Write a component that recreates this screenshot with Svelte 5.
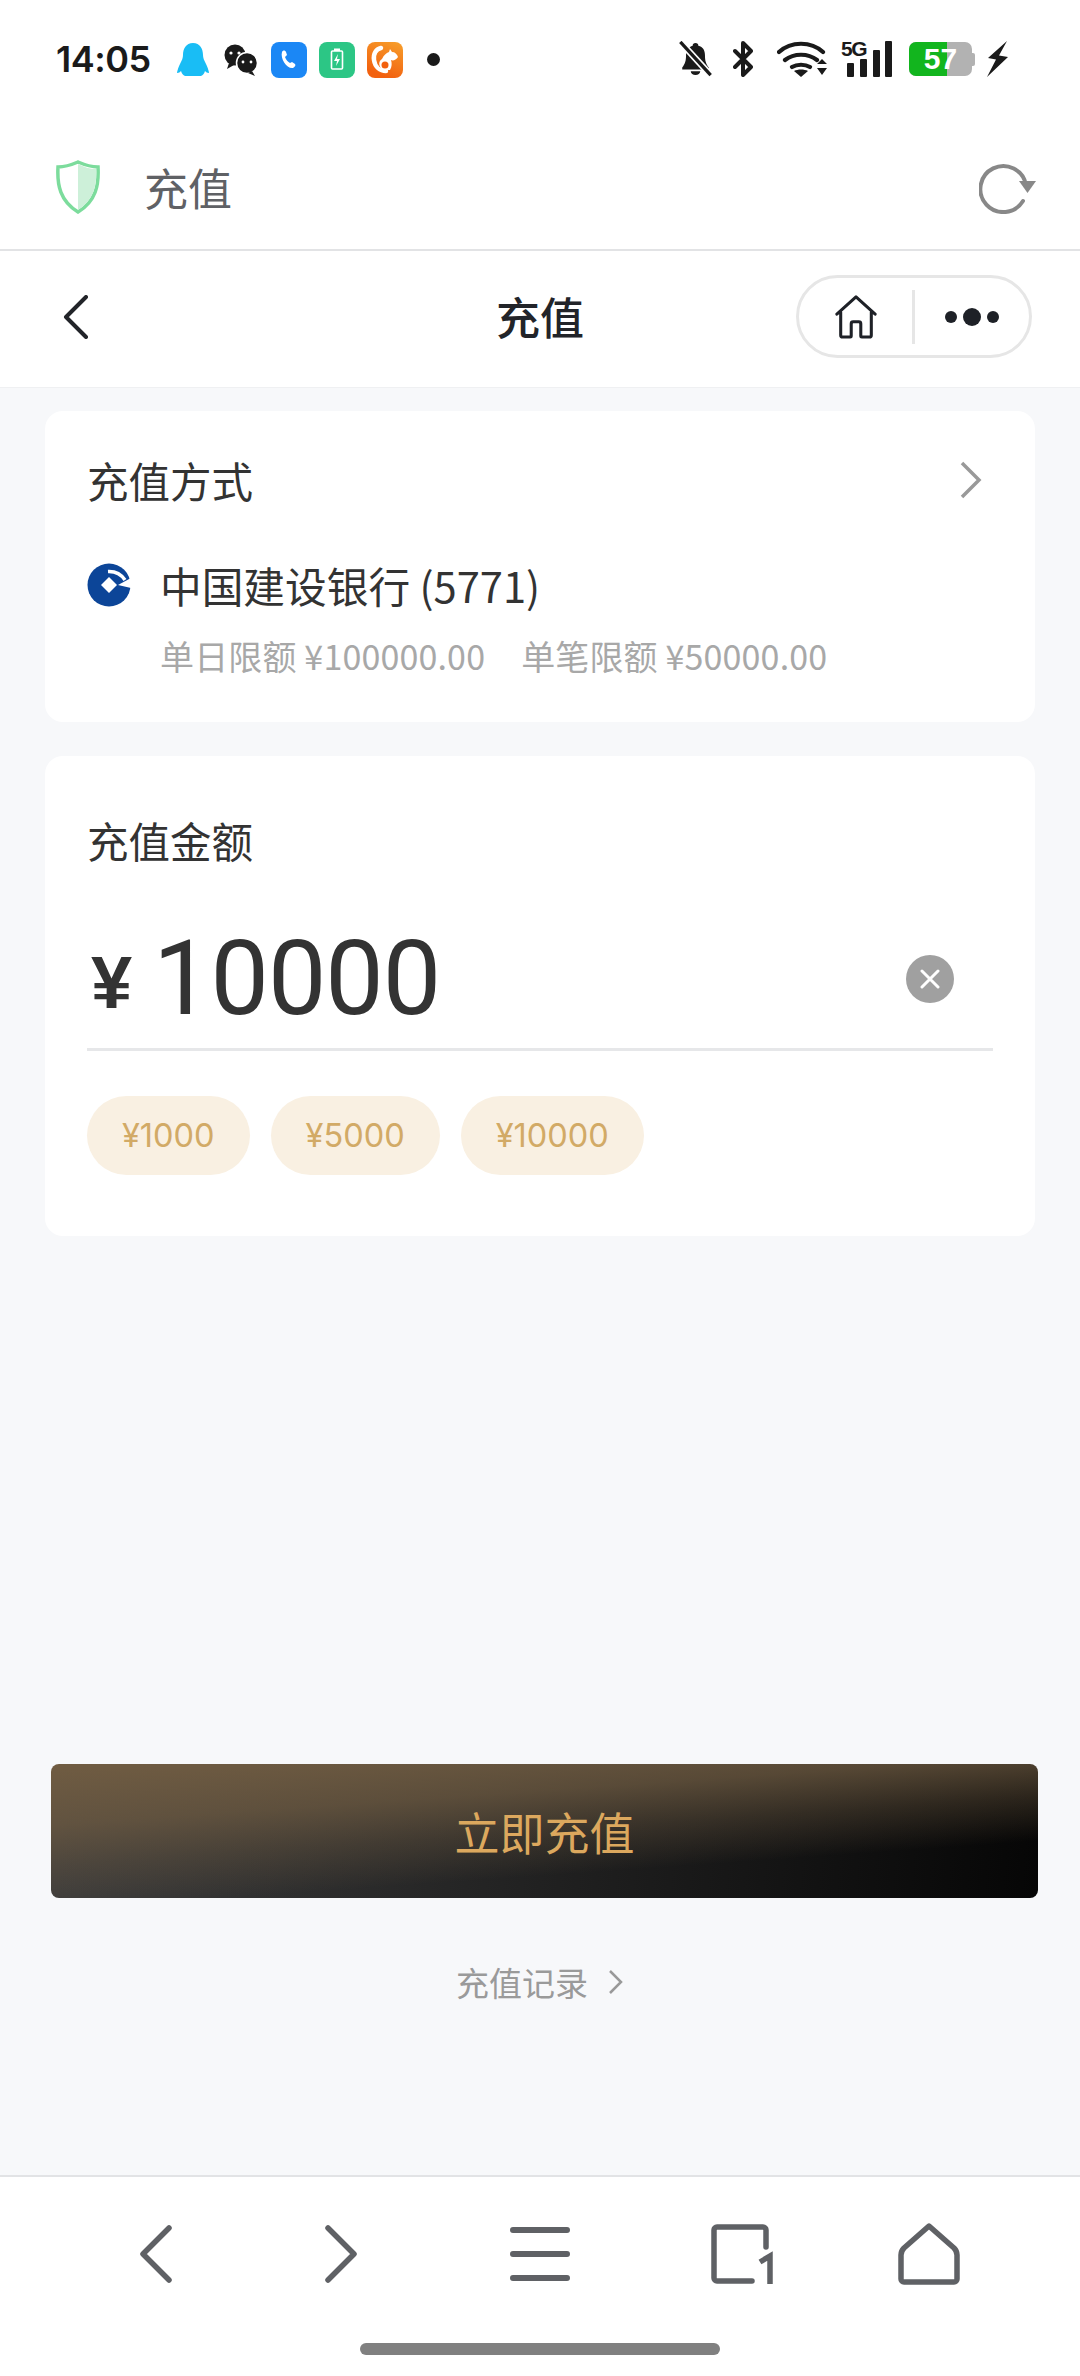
<script>
  const amounts = ['¥1000', '¥5000', '¥10000'];
</script>

<div class="page">
  <header class="status">
    <div class="left">
      <span class="time">14:05</span>
      <svg class="notif" width="250" height="40" viewBox="0 0 250 40">
        <defs>
          <linearGradient id="uc" x1="1" y1="0" x2="0.6" y2="1">
            <stop offset="0" stop-color="#f7a02c"/><stop offset="1" stop-color="#f2610f"/>
          </linearGradient>
        </defs>
        <path d="M19 4c-7 0-10 6-10 12 0 3-1 5-3 9-2 4-3 8-3 9 2 0 3-1 4-2 1 3 2 4 4 5h16c2-1 3-2 4-5 1 1 2 2 4 2 0-1-1-5-3-9-2-4-3-6-3-9 0-6-3-12-10-12z" fill="#19bdf5"/>
        <g transform="translate(3 3)">
          <circle cx="58" cy="13" r="10.500" fill="#1a1a1a"/><path d="M52 21l-2 6 7-4z" fill="#1a1a1a"/>
          <circle cx="70" cy="21" r="10.500" fill="#1a1a1a" stroke="#fff" stroke-width="1.500"/><path d="M75 29l3 5-7-3z" fill="#1a1a1a"/>
          <circle cx="54" cy="11" r="1.600" fill="#fff"/><circle cx="62" cy="11" r="1.600" fill="#fff"/><circle cx="66" cy="20" r="1.400" fill="#fff"/><circle cx="74" cy="20" r="1.400" fill="#fff"/>
        </g>
        <rect x="97" y="3" width="36" height="36" rx="8" fill="#1b87f5"/>
        <path d="M108 13c1-2 3-2 4 0l1 3-2 2c1 3 3 5 5 6l2-1 3 2c1 1 0 3-2 4-6 1-13-9-11-16z" fill="#fff"/>
        <rect x="145" y="3" width="36" height="36" rx="8" fill="#2cc685"/>
        <rect x="157.500" y="12" width="11" height="18" rx="1" fill="none" stroke="#fff" stroke-width="1.600"/>
        <rect x="160" y="9.500" width="6" height="2.500" fill="#fff"/>
        <path d="M164 15l-4 7h3l-1 5 4-7h-3z" fill="#fff"/>
        <rect x="193" y="3" width="36" height="36" rx="8" fill="url(#uc)"/>
        <path d="M207 9c-5 1-8 6-7 12 1 7 6 11 12 11" fill="none" stroke="#fff" stroke-width="4.500" stroke-linecap="round"/>
        <path d="M208 20c2-4 4-6 7-7l1-3 2 3c3 0 5 2 6 5-2 3-5 4-7 3 1 3 1 7-1 10h-5a6 6 0 0 1-3-11z" fill="#fff"/>
        <circle cx="211" cy="26" r="3.500" fill="#f2610f"/>
      </svg>
      <span class="dot"></span>
    </div>
    <div class="right">
      <svg width="35" height="36" viewBox="0 0 36 38">
        <path d="M18 2a3 3 0 0 1 3 3c5 1 7 5 7 10 0 6 1 9 4 13v2H4v-2c3-4 4-7 4-13 0-5 3-9 7-10a3 3 0 0 1 3-3z M13 32h10a5 4 0 0 1-10 0z" fill="#1a1a1a"/>
        <path d="M2 1l32 35" stroke="#fff" stroke-width="7"/><path d="M2 1l32 35" stroke="#1a1a1a" stroke-width="3.500"/>
      </svg>
      <svg class="bt" width="20" height="36" viewBox="0 0 20 36">
        <path d="M2 10l16 16-8 8V2l8 8L2 26" fill="none" stroke="#1a1a1a" stroke-width="4" stroke-linejoin="round" stroke-linecap="round"/>
      </svg>
      <svg class="wifi" width="50" height="36" viewBox="0 0 50 36">
        <path d="M2 11c12-11 32-11 44 0M8 19c9-7 23-7 32 0M15 26c5-3 13-3 18 0" fill="none" stroke="#1a1a1a" stroke-width="4.200" stroke-linecap="round"/>
        <path d="M24 36l-7-6c4-2 10-2 14 0z" fill="#1a1a1a"/>
        <path d="M40 23h10l-5-5zM40 27h10l-5 7z" fill="#1a1a1a"/>
      </svg>
      <div class="cell">
        <span class="five">5G</span>
        <span class="bar b1"></span><span class="bar b2"></span><span class="bar b3"></span><span class="bar b4"></span>
      </div>
      <div class="battery">
        <div class="shell">
          <span class="fill"></span>
          <span class="level">57</span>
        </div>
        <span class="nub"></span>
      </div>
      <svg class="bolt" width="21" height="36" viewBox="0 0 21 36">
        <path d="M20 0L1 17l8 1.500L0 36l21-20-9-1.500z" fill="#1a1a1a"/>
      </svg>
    </div>
  </header>

  <div class="urlbar">
    <div class="url-left">
      <svg width="46" height="54" viewBox="0 0 46 54">
        <path d="M23 2c7 3 13 5 20 5 1 18-2 34-20 45C5 41 2 25 3 7c7 0 13-2 20-5z" fill="#fff" stroke="#7cdc9c" stroke-width="3.500"/>
        <path d="M23 4c6 3 12 5 18 5 1 16-2 31-18 41z" fill="#cdf0d9"/>
      </svg>
      <span class="url-title">充值</span>
    </div>
    <svg width="58" height="54" viewBox="0 0 58 54">
      <path d="M47 25A23 23 0 1 0 44 41" fill="none" stroke="#888" stroke-width="4" stroke-linecap="round"/>
      <path d="M40 21h17l-8.500 12z" fill="#888"/>
    </svg>
  </div>

  <nav class="mini">
    <svg class="back" width="26" height="44" viewBox="0 0 26 44">
      <path d="M23 2L3 22l20 20" fill="none" stroke="#222429" stroke-width="4" stroke-linecap="round" stroke-linejoin="round"/>
    </svg>
    <h1>充值</h1>
    <div class="capsule">
      <svg width="44" height="44" viewBox="0 0 44 46">
        <path d="M2 20L22 2l20 18M6 18v24a2 2 0 0 0 2 2h8a1 1 0 0 0 1-1V30a2 2 0 0 1 2-2h6a2 2 0 0 1 2 2v13a1 1 0 0 0 1 1h8a2 2 0 0 0 2-2V18" fill="none" stroke="#1e2127" stroke-width="3.200" stroke-linejoin="round" stroke-linecap="round"/>
      </svg>
      <span class="sep"></span>
      <div class="dots"><i></i><i class="big"></i><i></i></div>
    </div>
  </nav>

  <main>
    <section class="card method">
      <div class="row">
        <span class="label">充值方式</span>
        <svg width="24" height="38" viewBox="0 0 24 38"><path d="M3 2l17 17L3 36" fill="none" stroke="#999" stroke-width="3.500"/></svg>
      </div>
      <div class="bank">
        <svg width="44" height="44" viewBox="0 0 44 44">
          <circle cx="22" cy="22" r="21.500" fill="#0c4598"/>
          <path d="M22 14l8 8-8 8-8-8z" fill="#fff"/>
          <path d="M21 8.500Q32 8 38 17" stroke="#fff" stroke-width="3.500" fill="none"/>
          <path d="M31 22L44 15V25z" fill="#fff"/>
        </svg>
        <span class="bank-name">中国建设银行 (5771)</span>
      </div>
      <div class="limits"><span>单日限额 ¥100000.00</span><span>单笔限额 ¥50000.00</span></div>
    </section>

    <section class="card amount">
      <span class="label">充值金额</span>
      <div class="input">
        <span class="yen">¥</span>
        <span class="value">10000</span>
        <span class="clear">
          <svg width="20" height="20" viewBox="0 0 20 20"><path d="M2 2l16 16M18 2L2 18" stroke="#fff" stroke-width="3" stroke-linecap="round"/></svg>
        </span>
      </div>
      <div class="chips">
        {#each amounts as a}
          <span class="chip">{a}</span>
        {/each}
      </div>
    </section>

    <button class="pay">立即充值</button>
    <div class="records">
      <span>充值记录</span>
      <svg width="16" height="26" viewBox="0 0 16 26"><path d="M2 2l11 11L2 24" fill="none" stroke="#999" stroke-width="2.500"/></svg>
    </div>
  </main>

  <footer>
    <div class="tools">
      <svg width="34" height="58" viewBox="0 0 34 58"><path d="M30 3L4 29l26 26" fill="none" stroke="#5f6165" stroke-width="5.500" stroke-linecap="round" stroke-linejoin="round"/></svg>
      <svg width="34" height="58" viewBox="0 0 34 58"><path d="M4 3l26 26L4 55" fill="none" stroke="#5f6165" stroke-width="5.500" stroke-linecap="round" stroke-linejoin="round"/></svg>
      <svg width="60" height="56" viewBox="0 0 60 56"><path d="M3 4h54M3 28h54M3 52h54" stroke="#5f6165" stroke-width="6" stroke-linecap="round"/></svg>
      <svg width="62" height="60" viewBox="0 0 62 60">
        <path d="M55 23V6a3 3 0 0 0-3-3H6a3 3 0 0 0-3 3v48a3 3 0 0 0 3 3h35" fill="none" stroke="#5f6165" stroke-width="5.500" stroke-linecap="round"/>
        <path d="M49 38l10-6v28" fill="none" stroke="#5f6165" stroke-width="5.500"/>
      </svg>
      <svg width="62" height="62" viewBox="0 0 62 62"><path d="M31 3L6 25q-3 3-3 7v24a3 3 0 0 0 3 3h50a3 3 0 0 0 3-3V32q0-4-3-7z" fill="none" stroke="#5f6165" stroke-width="5.500" stroke-linejoin="round"/></svg>
    </div>
    <div class="home-bar"></div>
  </footer>
</div>

<style>
  :global(body) { margin: 0; background: #fff; }
  .page {
    width: 1080px;
    height: 2376px;
    display: flex;
    flex-direction: column;
    font-family: "Noto Sans CJK SC", "Noto Sans", sans-serif;
    background: #f7f8fa;
    overflow: hidden;
  }
  svg { display: block; flex: none; }

  .status {
    height: 118px;
    box-sizing: border-box;
    padding: 39px 0 0 56px;
    background: #fff;
    display: flex;
    justify-content: space-between;
    align-items: flex-start;
  }
  .left { display: flex; align-items: center; height: 40px; }
  .time { font: 600 36px/40px Inter, sans-serif; color: #1a1a1a; width: 118px; letter-spacing: -0.5px; }
  .dot { width: 13px; height: 13px; border-radius: 50%; background: #1a1a1a; margin-left: 3px; }
  .right { display: flex; align-items: center; height: 40px; margin-right: 72px; }
  .bt { margin-left: 20px; }
  .wifi { margin-left: 24px; }
  .cell { position: relative; width: 51px; height: 36px; margin-left: 14px; }
  .five { position: absolute; left: 0; top: -3px; font: 700 21px/22px "Liberation Sans", sans-serif; color: #1a1a1a; letter-spacing: -1.5px; }
  .bar { position: absolute; bottom: 0; width: 7px; background: #1a1a1a; border-radius: 1px; }
  .b1 { left: 6px; height: 14px; }
  .b2 { left: 19px; height: 18px; }
  .b3 { left: 32px; height: 27px; }
  .b4 { left: 44px; height: 36px; }
  .battery { display: flex; align-items: center; width: 66px; height: 34px; margin-left: 17px; }
  .shell {
    position: relative;
    width: 63px;
    height: 34px;
    background: #b2b2b2;
    border-radius: 7px;
    overflow: hidden;
    text-align: center;
  }
  .nub { width: 3px; height: 13px; background: #b2b2b2; border-radius: 0 2px 2px 0; }
  .fill { position: absolute; left: 0; top: 0; bottom: 0; width: 38px; background: #12b51e; }
  .level { position: relative; font: 700 30px/34px "Liberation Sans", sans-serif; color: #fff; }
  .bolt { margin-left: 12px; }

  .urlbar {
    height: 133px;
    box-sizing: border-box;
    background: #fff;
    border-bottom: 2px solid #e2e3e5;
    padding: 7px 0 0 55px;
    display: flex;
    justify-content: space-between;
    align-items: center;
  }
  .url-left { display: flex; align-items: center; gap: 43px; }
  .url-title { font-size: 44px; line-height: 60px; color: #5f6165; }
  .urlbar > svg { margin-right: 43px; }

  .mini {
    height: 137px;
    box-sizing: border-box;
    background: #fff;
    border-bottom: 1px solid #eff0f2;
    position: relative;
    display: flex;
    align-items: center;
    justify-content: space-between;
    padding: 0 48px 5px 63px;
  }
  h1 {
    position: absolute;
    left: 0; right: 0;
    margin: -2px 0 0;
    text-align: center;
    font-size: 44px;
    font-weight: 500;
    line-height: 60px;
    color: #222429;
  }
  .capsule {
    position: relative;
    width: 236px;
    height: 83px;
    box-sizing: border-box;
    border: 3px solid #e6e6e6;
    border-radius: 42px;
    display: flex;
    align-items: center;
    padding-left: 35px;
  }
  .sep { width: 3px; height: 54px; background: #e6e6e6; margin-left: 34px; }
  .dots { display: flex; align-items: center; gap: 6px; margin-left: 30px; }
  .dots i { width: 12px; height: 12px; border-radius: 50%; background: #1e2127; }
  .dots i.big { width: 18px; height: 18px; }

  main {
    flex: 1;
    padding: 23px 45px 0;
    display: flex;
    flex-direction: column;
    min-height: 0;
  }
  .card {
    background: #fff;
    border-radius: 18px;
    padding: 0 42px;
    box-sizing: border-box;
  }
  .label { font-size: 41.500px; line-height: 56px; color: #333; }
  .method { height: 311px; padding-top: 41px; }
  .row { display: flex; justify-content: space-between; align-items: center; padding-right: 10px; }
  .bank { display: flex; align-items: center; gap: 29px; margin-top: 49px; }
  .bank-name { font-size: 41.700px; line-height: 56px; color: #333; }
  .limits {
    display: flex;
    gap: 36px;
    margin: 21px 0 0 73px;
    font-size: 34px;
    letter-spacing: 0.15px;
    line-height: 44px;
    color: #a8a8a8;
  }
  .amount {
    height: 480px;
    margin-top: 34px;
    padding-top: 56px;
    display: flex;
    flex-direction: column;
    align-items: stretch;
  }
  .input {
    display: flex;
    align-items: center;
    height: 141px;
    margin-top: 42px;
    border-bottom: 3px solid #e6e7e9;
    position: relative;
    box-sizing: border-box;
  }
  .yen { font: 700 74px/80px "Liberation Sans", sans-serif; color: #333; width: 66px; margin-top: 8px; padding-left: 4px; box-sizing: border-box; }
  .value { font: 400 104px/120px Roboto, sans-serif; color: #333; letter-spacing: -1px; }
  .clear {
    position: absolute;
    right: 39px;
    top: 45px;
    width: 48px;
    height: 48px;
    border-radius: 50%;
    background: #a0a0a0;
    display: flex;
    align-items: center;
    justify-content: center;
  }
  .chips { display: flex; gap: 21px; margin-top: 45px; }
  .chip {
    height: 79px;
    padding: 0 35px;
    display: flex;
    align-items: center;
    border-radius: 40px;
    background: #f9f0e2;
    color: #d2aa66;
    font: 400 32.500px/40px Inter, sans-serif;
  }
  .pay {
    margin: 528px 0 0 6px;
    width: 987px;
    height: 134px;
    flex: none;
    border: 0;
    border-radius: 8px;
    font-family: inherit;
    font-size: 45px;
    color: #dca85e;
    background:
      linear-gradient(176deg, rgba(112,92,66,1) 0%, rgba(112,92,66,.72) 30%, rgba(112,92,66,.35) 50%, rgba(112,92,66,0) 72%),
      linear-gradient(95deg, #3c3c3c 0%, #060606 100%);
  }
  .records {
    margin-top: 62px;
    display: flex;
    align-items: center;
    justify-content: center;
    gap: 20px;
    font-size: 33px;
    line-height: 44px;
    color: #9a9a9a;
  }

  footer {
    height: 201px;
    box-sizing: border-box;
    background: #fff;
    border-top: 2px solid #e2e3e5;
    position: relative;
  }
  .tools {
    display: flex;
    align-items: center;
    padding: 46px 0 0 139px;
  }
  .tools svg:nth-child(2) { margin-left: 151px; }
  .tools svg:nth-child(3) { margin-left: 152px; }
  .tools svg:nth-child(4) { margin-left: 141px; }
  .tools svg:nth-child(5) { margin-left: 125px; }
  .home-bar {
    position: absolute;
    left: 360px;
    top: 166px;
    width: 360px;
    height: 12px;
    border-radius: 6px;
    background: #808080;
  }
</style>
